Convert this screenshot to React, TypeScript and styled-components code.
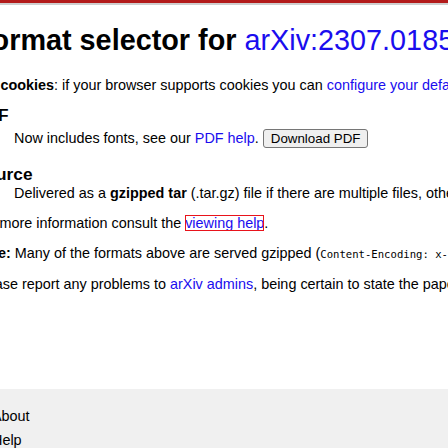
import styled, { createGlobalStyle } from 'styled-components';

const GlobalStyle = createGlobalStyle`
  html, body {
    margin: 0;
    padding: 0;
    background: #fff;
    overflow: hidden;
  }

  body {
    font-family: "Liberation Sans", Arial, sans-serif;
    font-size: 14.4px;
    color: #000;
  }
`;

const TopBar = styled.div`
  height: 3px;
  background-color: #b31b1b;
  border-bottom: 2px solid #cfcfcf;
`;

const Main = styled.main`
  margin-left: -26px;
  padding-top: 19px;
  white-space: nowrap;
`;

const Title = styled.h1`
  margin: 0;
  font-size: 28.8px;
  line-height: 32px;
  font-weight: bold;
`;

const Link = styled.a<{ $focused?: boolean }>`
  color: #1a0dee;
  text-decoration: none;
  font-weight: normal;
  outline: ${(p) => (p.$focused ? '1px solid #e8131b' : 'none')};
  outline-offset: -1px;
`;

const Text = styled.p<{ $top?: number }>`
  margin: ${(p) => p.$top ?? 12}px 0 0;
  line-height: 18px;
`;

const Formats = styled.dl`
  margin: 11px 0 0;
`;

const Term = styled.dt<{ $top?: number }>`
  margin-top: ${(p) => p.$top ?? 0}px;
  font-size: 17.28px;
  line-height: 20px;
  font-weight: bold;
`;

const Desc = styled.dd`
  margin: 0 0 0 40px;
  line-height: 18px;
`;

const Button = styled.button`
  margin: 4px 0 0;
  padding: 1px 7px;
  font-family: "Liberation Sans", Arial, sans-serif;
  font-size: 13.33px;
  font-weight: normal;
  color: #000;
  background: #efefef;
  border: 1px solid #767676;
  border-radius: 3px;
`;

const Code = styled.code`
  font-family: "DejaVu Sans Mono", "Liberation Mono", monospace;
  font-size: 10.6px;
`;

const Footer = styled.footer`
  margin-top: 96px;
  min-height: 120px;
  background: #f0f0f0;
  padding: 15px 0 0;
`;

const FooterList = styled.ul`
  margin: 0 0 0 -8px;
  padding: 0;
  list-style: none;
  line-height: 24px;
`;

const FooterLink = styled.a`
  color: #000;
  text-decoration: none;
`;

const App = () => {
  return (
    <>
      <GlobalStyle />
      <TopBar />
      <Main>
        <Title>
          Format selector for <Link href="#">arXiv:2307.01850</Link>
        </Title>

        <Text $top={20}>
          <b>Set cookies</b>: if your browser supports cookies you can{' '}
          <Link href="#">configure your default format</Link> for this and future downloads.
        </Text>

        <Formats>
          <Term>PDF</Term>
          <Desc>
            Now includes fonts, see our <Link href="#">PDF help</Link>.{' '}
            <Button type="button">Download PDF</Button>
          </Desc>

          <Term $top={16}>Source</Term>
          <Desc>
            Delivered as a <b>gzipped tar</b> (.tar.gz) file if there are multiple files, otherwise
            as a PDF file, or a <b>gzipped TeX, DVI, PostScript or HTML</b> file.
          </Desc>
        </Formats>

        <Text>
          For more information consult the{' '}
          <Link href="#" $focused>
            viewing help
          </Link>
          .
        </Text>

        <Text>
          <b>Note:</b> Many of the formats above are served gzipped (
          <Code>Content-Encoding: x-gzip</Code>).
        </Text>

        <Text>
          Please report any problems to <Link href="#">arXiv admins</Link>, being certain to state
          the paper identifier.
        </Text>
      </Main>

      <Footer>
        <FooterList>
          <li>
            <FooterLink href="#">About</FooterLink>
          </li>
          <li>
            <FooterLink href="#">Help</FooterLink>
          </li>
        </FooterList>
      </Footer>
    </>
  );
};

export default App;
